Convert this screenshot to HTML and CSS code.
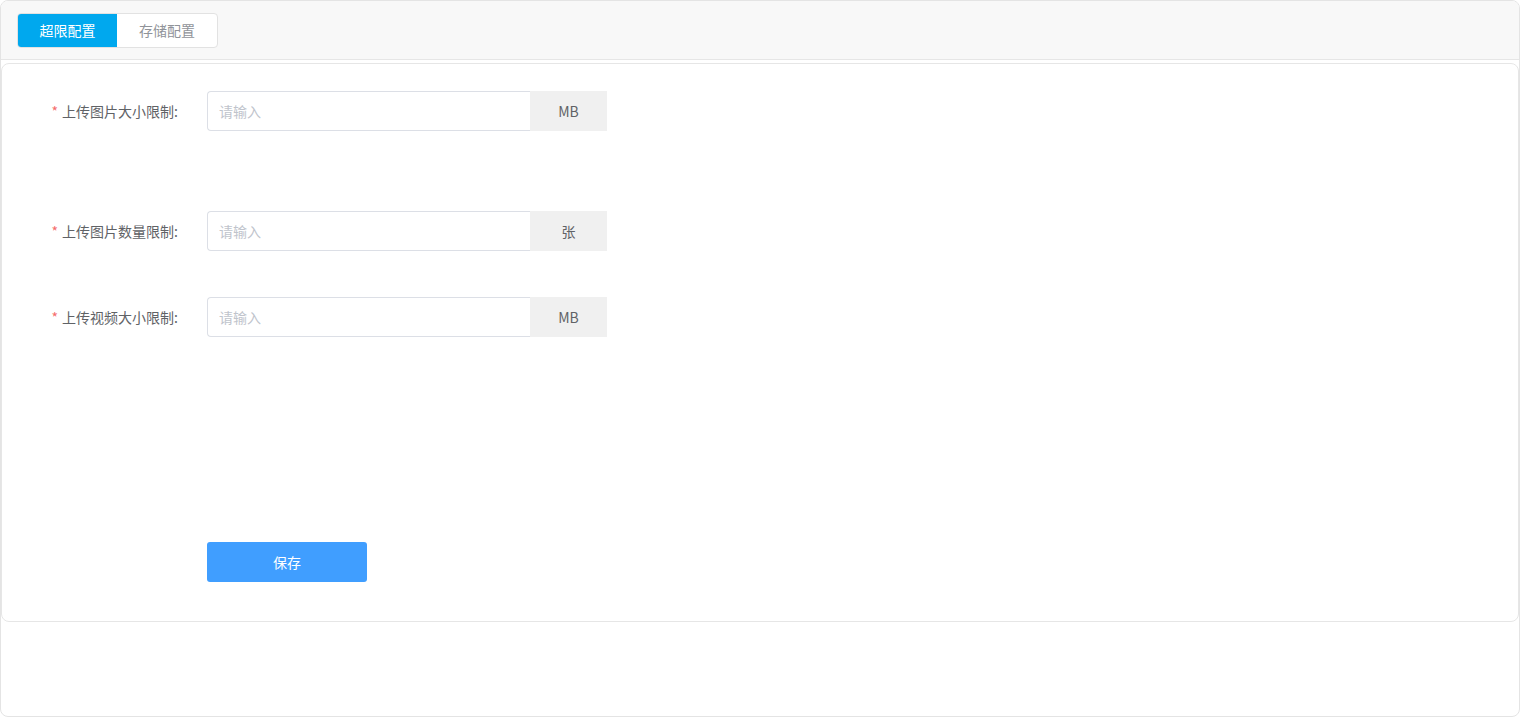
FILE: index.html
```html
<!DOCTYPE html>
<html lang="zh-CN">

<head>
    <meta charset="UTF-8">
    <meta name="viewport" content="width=device-width, initial-scale=1.0">
    <title>上传配置</title>
    <link rel="stylesheet" href="styles.css">
</head>

<body>
    <div class="page">
        <div class="tab-bar">
            <div class="tabs">
                <div class="tab active">超限配置</div>
                <div class="tab">存储配置</div>
            </div>
        </div>

        <div class="card">
            <form class="form">
                <div class="form-row row-first">
                    <label class="form-label"><span class="required">*</span>上传图片大小限制:</label>
                    <div class="input-group">
                        <input class="input" type="text" placeholder="请输入">
                        <span class="append">MB</span>
                    </div>
                </div>

                <div class="form-row row-second">
                    <label class="form-label"><span class="required">*</span>上传图片数量限制:</label>
                    <div class="input-group">
                        <input class="input" type="text" placeholder="请输入">
                        <span class="append">张</span>
                    </div>
                </div>

                <div class="form-row">
                    <label class="form-label"><span class="required">*</span>上传视频大小限制:</label>
                    <div class="input-group">
                        <input class="input" type="text" placeholder="请输入">
                        <span class="append">MB</span>
                    </div>
                </div>

                <div class="form-row row-actions">
                    <span class="form-label"></span>
                    <button type="button" class="save-btn">保存</button>
                </div>
            </form>
        </div>
    </div>
</body>

</html>
```

FILE: styles.css
```css
body {
    margin: 0;
    font-family: "Noto Sans CJK SC", "Noto Sans", sans-serif;
    background-color: #fff;
    color: #606266;
}

.page {
    width: 1520px;
    height: 717px;
    box-sizing: border-box;
    border: 1px solid #e4e4e4;
    border-radius: 8px;
    background-color: #fff;
    overflow: hidden;
}

.tab-bar {
    height: 59px;
    background-color: #f8f8f8;
    border-bottom: 1px solid #e6e6e6;
    padding: 12px 0 0 16px;
    box-sizing: border-box;
}

.tabs {
    display: inline-flex;
    border: 1px solid #e2e2e2;
    border-radius: 4px;
    background-color: #fff;
    overflow: hidden;
}

.tab {
    width: 100px;
    height: 33px;
    line-height: 33px;
    text-align: center;
    font-size: 14px;
    color: #909399;
}

.tab.active {
    width: 99px;
    background-color: #00a8ee;
    color: #fff;
}

.card {
    margin-top: 3px;
    height: 559px;
    box-sizing: border-box;
    border: 1px solid #e6e6e6;
    border-radius: 8px;
    background-color: #fff;
}

.form {
    padding-top: 27px;
}

.form-row {
    display: flex;
    align-items: center;
    height: 40px;
    margin-bottom: 46px;
}

.row-first {
    margin-bottom: 80px;
}

.row-actions {
    margin-top: 205px;
}

.form-label {
    width: 176px;
    flex-shrink: 0;
    margin-right: 29px;
    text-align: right;
    font-size: 14px;
    color: #606266;
}

.required {
    color: #f56c6c;
    margin-right: 4px;
}

.input-group {
    display: flex;
    height: 40px;
}

.input {
    width: 323px;
    height: 40px;
    box-sizing: border-box;
    border: 1px solid #dcdfe6;
    border-right: none;
    border-radius: 4px 0 0 4px;
    padding: 0 11px;
    font-family: inherit;
    font-size: 14px;
    color: #606266;
    outline: none;
}

.input::placeholder {
    color: #c0c4cc;
}

.append {
    width: 77px;
    line-height: 40px;
    text-align: center;
    background-color: #f0f0f0;
    font-size: 14px;
    color: #606266;
}

.save-btn {
    width: 160px;
    height: 40px;
    border: none;
    border-radius: 3px;
    background-color: #409eff;
    color: #fff;
    font-family: inherit;
    font-size: 14px;
    cursor: pointer;
}
```
